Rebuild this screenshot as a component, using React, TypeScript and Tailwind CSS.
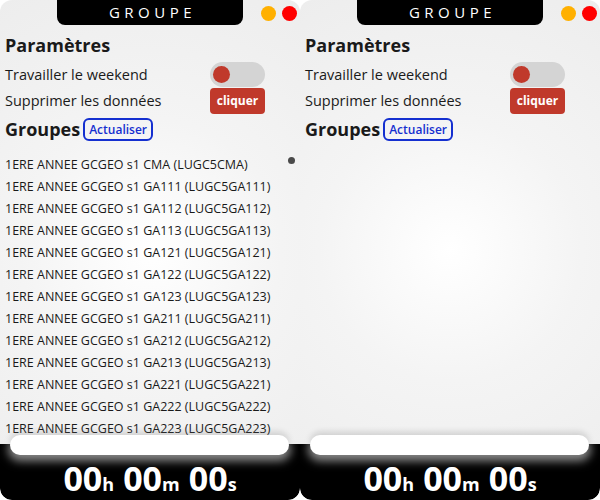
import React from 'react';

const groups = [
  'CMA',
  'GA111',
  'GA112',
  'GA113',
  'GA121',
  'GA122',
  'GA123',
  'GA211',
  'GA212',
  'GA213',
  'GA221',
  'GA222',
  'GA223',
];

const timer = [
  { value: '00', unit: 'h' },
  { value: '00', unit: 'm' },
  { value: '00', unit: 's' },
];

function Panel({ withList }: { withList: boolean }) {
  return (
    <div className="relative flex h-[500px] w-[300px] flex-col overflow-hidden rounded-xl bg-[radial-gradient(circle_at_50%_50%,#ffffff_0%,#f4f4f4_45%,#ededed_100%)] font-['Open_Sans',sans-serif] text-[#1a1a1a]">
      {/* Header */}
      <div className="grid h-[25px] grid-cols-[57px_186px_57px]">
        <div />
        <div className="flex items-center justify-center rounded-b-lg bg-black pl-[5px] text-[15px] tracking-[0.3em] text-white">
          GROUPE
        </div>
        <div className="flex items-center justify-end gap-[6px] pr-[3px] pt-[1px]">
          <span className="h-[15px] w-[15px] rounded-full bg-[#ffb000]" />
          <span className="h-[15px] w-[15px] rounded-full bg-[#ff0000]" />
        </div>
      </div>

      <div className="flex min-h-0 flex-1 flex-col overflow-hidden px-[5px]">
        <h2 className="mt-[6px] h-[28px] text-[18px] font-bold leading-[28px]">Paramètres</h2>

        <div className="mt-[3px] flex h-[25px] items-center justify-between pr-[30px]">
          <span className="text-[14.5px]">Travailler le weekend</span>
          <div className="flex h-[25px] w-[55px] items-center rounded-full bg-[#d4d4d4] pl-[3px]">
            <span className="h-[17px] w-[17px] rounded-full bg-[#c0392b]" />
          </div>
        </div>

        <div className="mt-[1px] flex h-[26px] items-center justify-between pr-[30px]">
          <span className="text-[14.5px]">Supprimer les données</span>
          <button className="flex h-[26px] w-[55px] items-center justify-center rounded-[4px] bg-[#c0392b] text-[12px] font-bold text-white">
            cliquer
          </button>
        </div>

        <div className="mt-[3px] flex h-[25px] items-center gap-[3px]">
          <h2 className="text-[18px] font-bold">Groupes</h2>
          <button className="flex h-[23px] items-center rounded-[6px] border-2 border-[#1530d0] px-[4px] text-[12px] font-semibold text-[#1530d0]">
            Actualiser
          </button>
        </div>

        {withList && (
          <ul className="mt-[12px] flex flex-col">
            {groups.map((g) => (
              <li key={g} className="h-[22px] shrink-0 text-[12.5px] leading-[22px]">
                1ERE ANNEE GCGEO s1 {g} (LUGC5{g})
              </li>
            ))}
          </ul>
        )}
      </div>

      {withList && <span className="absolute left-[288px] top-[157px] h-[7px] w-[7px] rounded-full bg-[#4a4a4a]" />}

      {/* Timer */}
      <div className="relative flex h-[56px] shrink-0 items-start justify-center rounded-b-xl bg-black pt-[17px] font-bold text-white">
        <div className="absolute left-[10px] top-[-9px] h-[20px] w-[279px] rounded-full bg-white shadow-[0_-3px_6px_rgba(0,0,0,0.15),0_4px_10px_2px_rgba(255,255,255,0.55)]" />
        <div className="flex items-baseline gap-[9px] leading-none">
          {timer.map((t) => (
            <div key={t.unit} className="flex items-baseline">
              <span className="text-[34px]">{t.value}</span>
              <span className="text-[18px]">{t.unit}</span>
            </div>
          ))}
        </div>
      </div>
    </div>
  );
}

export default function App() {
  return (
    <div className="flex h-[500px] w-[600px] bg-white">
      <Panel withList />
      <Panel withList={false} />
    </div>
  );
}
